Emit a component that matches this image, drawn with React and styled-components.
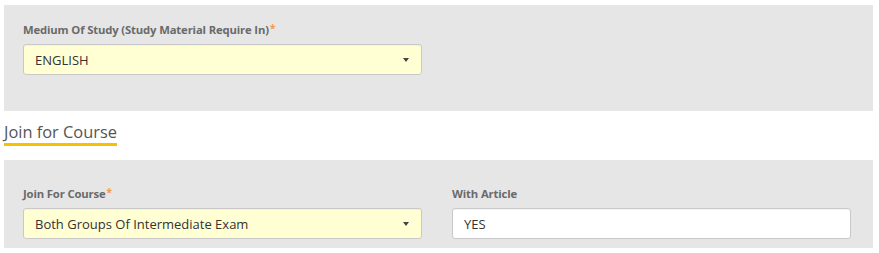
import React from "react";
import styled, { createGlobalStyle } from "styled-components";

const Global = createGlobalStyle`
  html, body { margin: 0; padding: 0; background: #fff; }
  body { font-family: "Open Sans", "Liberation Sans", Arial, sans-serif; }
  * { box-sizing: border-box; }
`;

const Page = styled.div`
  width: 879px;
  padding: 5px 6px 0 4px;
`;

const Panel = styled.section`
  background: #e6e6e6;
  padding: ${(p) => p.$top}px 22px ${(p) => p.$bottom}px 19px;
  display: grid;
  grid-template-columns: 1fr 1fr;
  column-gap: 30px;
`;

const Field = styled.div`
  display: flex;
  flex-direction: column;
  gap: 7px;
`;

const Label = styled.label`
  display: block;
  height: 14px;
  font-size: 11.3px;
  font-weight: 700;
  color: #6a6a6a;
  line-height: 14px;
  letter-spacing: -0.15px;
  white-space: nowrap;
`;

const Req = styled.span`
  color: #f39a4a;
  font-size: 10px;
  line-height: 0;
  vertical-align: 2px;
  margin-left: 1px;
`;

const SelectBox = styled.div`
  height: 31px;
  display: flex;
  align-items: center;
  justify-content: space-between;
  padding: 0 12px 0 11px;
  background: ${(p) => (p.$plain ? "#ffffff" : "#ffffd3")};
  border: 1px solid #c9c9c9;
  border-radius: 3px;
  box-shadow: inset 0 1px 1px rgba(0, 0, 0, 0.04);
  font-size: 13px;
  color: #333;
`;

const Caret = styled.span`
  width: 0;
  height: 0;
  border-left: 3.5px solid transparent;
  border-right: 3.5px solid transparent;
  border-top: 4px solid #444;
`;

const Heading = styled.h3`
  display: inline-block;
  margin: 11px 0 14px 0;
  padding-bottom: 1px;
  font-size: 16.4px;
  font-weight: 400;
  color: #555;
  line-height: 20px;
  border-bottom: 3px solid #f7c102;
`;

const Select = ({ value, plain, arrow = true }) => (
  <SelectBox $plain={plain}>
    <span>{value}</span>
    {arrow && <Caret />}
  </SelectBox>
);

export default function App() {
  return (
    <>
      <Global />
      <Page>
        <Panel $top={18} $bottom={36}>
          <Field>
            <Label>
              Medium Of Study (Study Material Require In)<Req>*</Req>
            </Label>
            <Select value="ENGLISH" />
          </Field>
        </Panel>
        <Heading>Join for Course</Heading>
        <Panel $top={27} $bottom={9}>
          <Field>
            <Label>
              Join For Course<Req>*</Req>
            </Label>
            <Select value="Both Groups Of Intermediate Exam" />
          </Field>
          <Field>
            <Label>With Article</Label>
            <Select value="YES" plain arrow={false} />
          </Field>
        </Panel>
      </Page>
    </>
  );
}
